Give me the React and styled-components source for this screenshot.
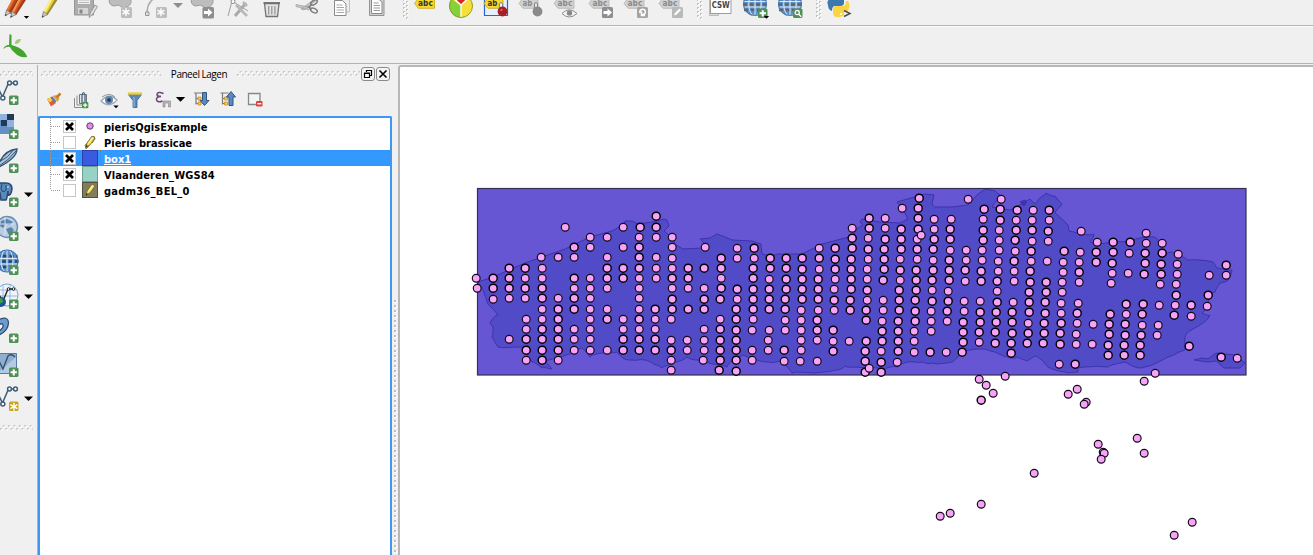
import React from "react";
import styled, { createGlobalStyle } from "styled-components";

const GlobalStyle = createGlobalStyle`
  html, body { margin: 0; height: 100%; overflow: hidden; background: #f0f0f0; }
  * { box-sizing: border-box; }
  svg { display: block; }
`;

const Window = styled.div`
  width: 1313px;
  height: 555px;
  display: flex;
  flex-direction: column;
  background: #f0f0f0;
  font-family: "DejaVu Sans Condensed", "DejaVu Sans", sans-serif;
  color: #000;
  overflow: hidden;
`;

const ToolBar = styled.div`
  display: flex;
  flex: none;
  height: ${(p) => p.$height}px;
  border-bottom: 1px solid #b4b4b4;
  border-top: ${(p) => (p.$lit ? "1px solid #fbfbfb" : "none")};
  overflow: hidden;
`;

const Workspace = styled.div`
  display: flex;
  flex: 1;
  min-height: 0;
  padding-top: 1px;
`;

const SideBar = styled.div`
  display: flex;
  flex-direction: column;
  flex: none;
  width: 37px;
  padding-top: 6px;
`;

const SideTools = styled.div`
  display: flex;
  flex-direction: column;
  padding: 2px 0 6px;
`;

const LayersPanel = styled.section`
  display: flex;
  flex-direction: column;
  flex: none;
  width: 356px;
  border-left: 1px solid #b0b0b0;
`;

const PanelTitle = styled.header`
  display: flex;
  align-items: center;
  height: 18px;
  padding: 0 0 1px 3px;
`;

const TitleText = styled.h2`
  margin: 0;
  width: 76px;
  flex: none;
  text-align: center;
  font: 400 10px "Open Sans", sans-serif;
  letter-spacing: -0.48px;
  white-space: nowrap;
`;

const TitleButton = styled.button`
  display: grid;
  place-items: center;
  flex: none;
  width: 14px;
  height: 14px;
  margin-left: 1px;
  padding: 0;
  border: 1px solid #8a8a8a;
  border-radius: 3px;
  background: #f4f4f4;
`;

const PanelTools = styled.div`
  display: flex;
  height: 33px;
  padding: 1px 0 0 2px;
`;

const Tree = styled.ul`
  flex: 1;
  margin: 0;
  padding: 0;
  list-style: none;
  width: 354px;
  border: 2px solid #3d97f3;
  border-bottom: 0;
  border-radius: 2px 2px 0 0;
  background: #fff;
`;

const Row = styled.li`
  display: flex;
  align-items: center;
  height: 16px;
  background: ${(p) => (p.$selected ? "#3399ff" : "transparent")};
  color: ${(p) => (p.$selected ? "#fff" : "#000")};
`;

const RowLabel = styled.span`
  flex: 1;
  height: 16px;
  line-height: 17px;
  padding-left: 3px;
  border: 1px ${(p) => (p.$selected ? "dotted #c0702a" : "solid transparent")};
  font-size: 11px;
  font-weight: 700;
  letter-spacing: ${(p) => p.$track || 0}px;
  text-decoration: ${(p) => (p.$selected ? "underline" : "none")};
  white-space: nowrap;
`;

const Splitter = styled.div`
  flex: none;
  width: 5px;
  display: flex;
  align-items: flex-start;
  justify-content: flex-start;
  padding-top: 235px;
`;

const MapFrame = styled.main`
  flex: 1;
  min-width: 0;
  margin-top: 0;
  border: 2px solid #b7b7b7;
  border-right: 0;
  border-bottom: 0;
  border-top-left-radius: 3px;
  background: #fff;
  overflow: hidden;
`;

/* ---------- icon pieces ---------- */

const Icon = ({ w, h, children }) => (
  <svg width={w} height={h} viewBox={`0 0 ${w} ${h}`} style={{ flex: "none" }}>{children}</svg>
);

const Badge = ({ x, y, kind = "plus", fill = "#4f9155", size = 9.5 }) => (
  <g transform={`translate(${x} ${y})`}>
    <rect width={size} height={size} rx="1.6" fill={fill} />
    {kind === "plus" && <path d="M4.75 1.7v6.2M1.6 4.75h6.3" stroke="#fff" strokeWidth="2" />}
    {kind === "star" && <path d="M5 1.2v8M1.4 3.2l7 4M8.4 3.2l-7 4" stroke="#fff" strokeWidth="1.4" />}
    {kind === "arrow" && <path d="M1.5 4h4V1.6L10 5.5 5.5 9.4V7h-4z" fill="#fff" />}
    {kind === "turn" && <path d="M3 6C2 2.500 6.500 1 8 3.500S7 8 5 7.500M4.500 4.500v4H8" stroke="#fff" strokeWidth="1.5" fill="none" />}
    {kind === "pen" && <path d="M2 8.6l.8-2.4L7.5 1.6l1.5 1.5-4.6 4.6z" fill="#fff" />}
    {kind === "lens" && <path d="M6 6l2.3 2.3M4.2 2a2.1 2.1 0 1 1 0 4.2a2.1 2.1 0 0 1 0-4.2" stroke="#fff" strokeWidth="1.3" fill="none" />}
  </g>
);

const Caret = ({ x, y, s = 4.5, fill = "#000" }) => (
  <path d={`M${x - s} ${y}h${s * 2}l${-s} ${s}z`} fill={fill} />
);

const Pencil = ({ x, y, a, b, c }) => (
  <g transform={`translate(${x} ${y})`}>
    <path d="M0 0l1.5-6L10-22h7L5-3z" fill={b} />
    <path d="M1.5-6L10-22h2.5L3-4.5z" fill={a} />
    <path d="M4.2-3.2L14-20h3L5.4-2z" fill={c} />
    <path d="M0 0l1.5-6 4.2 2.8z" fill="#c9c5bb" stroke="#777" strokeWidth=".7" />
    <path d="M0 0l.6-2 1.3 1z" fill="#333" />
  </g>
);

const VGrip = ({ w, h = 24, x }) => (
  <Icon w={w} h={h}>
    {[0, 4, 8, 12, 16].map((y) => (
      <g key={y}>
        <rect x={x} y={y - 1} width="2" height="2" fill="#c3c3c3" />
        <rect x={x + 1} y={y} width="1.5" height="1.5" fill="#fff" />
        <rect x={x + 3} y={y + 1} width="2" height="2" fill="#c3c3c3" />
        <rect x={x + 4} y={y + 2} width="1.5" height="1.5" fill="#fff" />
      </g>
    ))}
  </Icon>
);

const SplitDots = ({ count }) => (
  <Icon w={5} h={count * 5}>
    {Array.from({ length: count }, (_, i) => (
      <g key={i}>
        <rect x="1" y={i * 5} width="2" height="2" fill="#bdbdbd" />
        <path d={`M3.500 ${i * 5 + 0.5}v2h-2`} stroke="#fff" fill="none" />
      </g>
    ))}
  </Icon>
);

const HGrip = ({ w }) => (
  <Icon w={w} h={6}>
    {Array.from({ length: Math.floor(w / 5.4) + 1 }, (_, i) => (
      <g key={i}>
        <rect x={i * 5.4} y="3" width="2" height="2" fill="#c6c6c6" />
        <rect x={i * 5.4 + 1} y="4" width="1.500" height="1.500" fill="#fff" />
        <rect x={i * 5.4 + 2.7} y="0" width="2" height="2" fill="#c6c6c6" />
        <rect x={i * 5.4 + 3.7} y="1" width="1.500" height="1.500" fill="#fff" />
      </g>
    ))}
  </Icon>
);

const Tag = ({ on, text = "abc", w = 20 }) => (
  <g>
    <path d={`M0 3.5L4-2H${w}V8.300H4z`} fill={on ? "#f5d92c" : "#d2d2d2"} stroke={on ? "#c9a412" : "#b2b2b2"} strokeWidth=".8" />
    <text x="3.600" y="6.300" fontSize="8.300" fontWeight="700" fontFamily="DejaVu Sans" fill={on ? "#333" : "#8a8a8a"} textLength={text.length * 4.9} lengthAdjust="spacingAndGlyphs">{text}</text>
  </g>
);

const Cloud = () => (
  <path d="M.5-2C-1 4 3 7 7 5.500s5 3 9 2 6-3 6-6V-4H1z" fill="#bdbdbd" stroke="#999" />
);

const Globe = ({ x, y, r = 12, land }) => (
  <g transform={`translate(${x} ${y})`}>
    <circle r={r} fill="#5d92cc" />
    <path d={`M${-r + 1} -5h${r * 2 - 2}M${-r} 0.500h${r * 2}M${-r + 1} 6h${r * 2 - 2}`} stroke={land} strokeWidth="2.600" strokeDasharray="4 2.500" />
    <path d={`M0 ${-r}V${r}M${-r} 3h${r * 2}M${-r} -2.500h${r * 2}`} stroke="#d9e8f7" strokeWidth="1" />
    <ellipse rx={r * 0.52} ry={r} fill="none" stroke="#d9e8f7" />
    <circle r={r - 0.5} fill="none" stroke="#4677ad" />
  </g>
);

/* ---------- top toolbar ---------- */

const EditTools = () => (
  <>
    <Icon w={32} h={25}>
      <Pencil x={5} y={16} a="#e9792f" b="#c2451c" c="#8f3a1e" />
      <Pencil x={10.500} y={17.500} a="#ef9a49" b="#d9521e" c="#963e20" />
      <Caret x={26.500} y={16} s={2.700} />
    </Icon>
    <Icon w={35} h={25}><Pencil x={10} y={17.500} a="#fbf08a" b="#e6cf3c" c="#98883a" /></Icon>
    <Icon w={35} h={25}>
      <path d="M7.500-3h19v18h-19z" fill="#adadad" stroke="#969696" />
      <path d="M11-3h12v7H11z" fill="#efefef" /><path d="M12 0h10M12 2.500h10" stroke="#bbb" />
      <path d="M11 8h10v6H11z" fill="#d6d6d6" /><path d="M12.500 9.500h3v4h-3z" fill="#888" />
      <path d="M22 17.500l1.500-5L28 5l2.500 1.500L26 14z" fill="#dedede" stroke="#888" strokeWidth=".8" />
    </Icon>
    <Icon w={35} h={25}><g transform="translate(7)"><Cloud /></g><Badge x={19} y={7} kind="star" fill="#bdbdbd" size={11} /></Icon>
    <Icon w={49} h={25}>
      <path d="M10 14C10 6 12 1 18-2" stroke="#aaa" strokeWidth="1.500" fill="none" />
      <path d="M8.500 12h3.500v3.500H8.500z" fill="#ddd" stroke="#999" />
      <Badge x={19} y={7} kind="star" fill="#bdbdbd" size={11} />
      <Caret x={41} y={3} s={5} fill="#8d8d8d" />
    </Icon>
    <Icon w={35} h={25}><g transform="translate(5)"><Cloud /></g><Badge x={16.500} y={7} kind="arrow" fill="#8e8e8e" size={11.500} /></Icon>
    <Icon w={34} h={25}>
      <path d="M7 16L11 1l16 10" stroke="#a0a0a0" fill="none" />
      <circle cx="12" cy="1.500" r="2" fill="#fff" stroke="#888" />
      <path d="M14 16L25 3" stroke="#aaa" strokeWidth="3" /><path d="M15 5l11 11M22 2l4 4" stroke="#b7b7b7" strokeWidth="2.500" />
    </Icon>
    <Icon w={35} h={25}>
      <path d="M9.500 3.500h14.500l-1.500 13h-11.500z" fill="#e3e3e3" stroke="#737373" strokeWidth="1.300" />
      <path d="M8.500 3h16.500" stroke="#6f6f6f" strokeWidth="1.800" /><path d="M13.700 6v8.500M16.800 6v8.500M19.900 6v8.500" stroke="#999" strokeWidth="1.300" />
    </Icon>
    <Icon w={35} h={25}>
      <path d="M6 4.500l15 3L19 10 6 6.500zM26-2l2 1L14 10l-3-1z" fill="#c6c6c6" stroke="#9d9d9d" strokeWidth=".7" />
      <ellipse cx="24" cy="10.500" rx="3.500" ry="2" transform="rotate(25 24 10.500)" stroke="#7f7f7f" strokeWidth="1.500" fill="none" />
      <ellipse cx="24" cy="2.500" rx="3.700" ry="2" transform="rotate(-35 24 2.500)" stroke="#7f7f7f" strokeWidth="1.500" fill="none" />
      <path d="M19 7l3-2.500M18 6.500l3 2.500" stroke="#7f7f7f" strokeWidth="1.600" />
    </Icon>
    <Icon w={35} h={25}>
      <path d="M14.500-2h10v14h-10z" fill="#ededed" stroke="#c4c4c4" />
      <path d="M9.500.500h8l3.500 3.500v11.500H9.500z" fill="#fff" stroke="#8b8b8b" />
      <path d="M11.500 5h6M11.500 7.500h7.500M11.500 10h7.500M11.500 12.500h7.500" stroke="#aaa" />
    </Icon>
    <Icon w={37} h={25}>
      <path d="M9.500-2H24v17.500H9.500z" fill="#d2d2d2" stroke="#929292" />
      <path d="M11.500-1h7l3.500 3v11.500H11.500z" fill="#fff" stroke="#888" />
      <path d="M13.500 3h5M13.500 5.500H20M13.500 8H20M13.500 10.500H20" stroke="#999" />
    </Icon>
  </>
);

const LabelTools = () => (
  <>
    <VGrip w={15} x={6} />
    <Icon w={31} h={25}><g transform="translate(2.500)"><Tag on /></g></Icon>
    <Icon w={36} h={25}>
      <circle cx="18" cy="6" r="11.500" fill="#f6df3b" />
      <path d="M18 6v11.500A11.500 11.500 0 0 1 8.500-1z" fill="#85d238" />
      <path d="M18 4.500L10-4h16z" fill="#d92424" />
      <path d="M18 17.500V5L9-3M18 5L27-3" stroke="#fff" strokeWidth="1.300" fill="none" />
      <circle cx="18" cy="6" r="11.500" fill="none" stroke="#8f9b2c" />
    </Icon>
    <Icon w={35} h={25}>
      <path d="M5.500-2h23v17.500h-23z" fill="#e6efff" stroke="#2668cf" strokeWidth="1.200" />
      <g transform="translate(5)"><Tag on text="ab" w={19} /></g>
      <path d="M20.500 9V4q1.500-3 3 0v5" stroke="#888" strokeWidth="1.200" fill="#fff" />
      <circle cx="23.500" cy="11.500" r="4.900" fill="#a81e25" /><circle cx="22.500" cy="10" r="1.200" fill="#cf6060" />
    </Icon>
    <Icon w={35} h={25}>
      <g transform="translate(5)"><Tag text="ab" w={19} /></g>
      <path d="M20.500 9V4q1.500-3 3 0v5" stroke="#888" strokeWidth="1.200" fill="#eee" /><circle cx="23.500" cy="11.500" r="4.900" fill="#8a8a8a" />
    </Icon>
    <Icon w={35} h={25}>
      <g transform="translate(5)"><Tag /></g>
      <path d="M13 13.500q7-7.500 15 0q-8 7-15 0z" fill="#f4f4f4" stroke="#8c8c8c" /><circle cx="20.500" cy="13" r="2.700" fill="#888" />
    </Icon>
    <Icon w={35} h={25}><g transform="translate(5)"><Tag /></g><Badge x={18} y={7} kind="arrow" fill="#8e8e8e" size={11} /></Icon>
    <Icon w={35} h={25}><g transform="translate(5)"><Tag /></g><Badge x={18} y={7} kind="turn" fill="#a4a4a4" size={11} /></Icon>
    <Icon w={36} h={25}><g transform="translate(5)"><Tag /></g><Badge x={18} y={7} kind="pen" fill="#b9b9b9" size={11} /></Icon>
  </>
);

const WebTools = () => (
  <>
    <VGrip w={18} x={7} />
    <Icon w={30} h={25}>
      <path d="M1.500-2h9v17.500H1.500z" fill="#ddd" stroke="#bbb" />
      <path d="M2.500-2h20.500v15.500H2.500z" fill="#fff" stroke="#9b9b9b" />
      <text x="3.700" y="7.800" fontSize="8.700" fontWeight="700" fontFamily="DejaVu Sans" fill="#444" textLength="18" lengthAdjust="spacingAndGlyphs">CSW</text>
    </Icon>
    <Icon w={35} h={25}><Globe x={17} y={4} land="#66615d" /><Badge x={20} y={8.500} /><Caret x={28.500} y={16} s={2.700} /></Icon>
    <Icon w={35} h={25}><Globe x={17} y={4} land="#66615d" /><Badge x={20} y={8.500} kind="lens" /></Icon>
    <VGrip w={17} x={8} />
    <Icon w={35} h={25}>
      <path d="M3 5Q1 0 6-1h13v4q0 3-4 3h-5q-3 0-3 5Q3 10 3 5z" fill="#3c78ad" />
      <path d="M8 13V9q0-3 4-3h6q3 0 3-5h2q3 4 0 10l-4 1v3q-5 4-10 1z" fill="#fbd444" /><circle cx="16" cy="14" r="1" fill="#fff" />
      <path d="M19 10.500l6 3-6 3" stroke="#4d4d4d" strokeWidth="1.500" fill="none" />
    </Icon>
  </>
);

/* ---------- left toolbar ---------- */

const Vector = () => (
  <g fill="none" stroke="#3f5d78" strokeWidth="1.500">
    <path d="M-2 9L2.500 18 8.500 4h6" /><circle cx="2.800" cy="19" r="2" fill="#fff" /><circle cx="9.500" cy="4" r="1.900" fill="#fff" /><circle cx="15.500" cy="4" r="1.900" fill="#fff" />
  </g>
);

const sideIcons = [
  { art: <Vector /> },
  { art: <><path d="M-6 1h20v20H-6z" fill="#6490c4" /><path d="M0 1h7v6H0zM7 7h7v7H7z" fill="#8eb2dc" /><path d="M7 1h7v6H7zM1 7h6v6H1zM0 19H-4v-6h4z" fill="#223a58" /></> },
  { art: <><path d="M-1 16Q5 3 17 2q0 9-18 18z" fill="#a9c5e0" stroke="#37526c" strokeWidth="1.300" /><path d="M-1 19Q8 14 16 4M0 14Q8 11 13 3" stroke="#37526c" fill="none" /></> },
  { menu: true, art: <><path d="M-2 2h8q6 0 6 6-1 7-4 6v-4q-1 8-2 9H1l-1-7h-2z" fill="#5789ba" stroke="#28486b" strokeWidth="1.500" /><path d="M2 3q-2 5 0 7t4-1V4" fill="none" stroke="#28486b" /><circle cx="8" cy="6" r=".8" fill="#fff" /></> },
  { menu: true, art: <><circle cx="7" cy="12" r="10.500" fill="#b7cde3" stroke="#6d8fb3" strokeWidth="1.500" /><path d="M1 6l6-2 6 3-3 3-4-1-3 4-3-2zM6 14l5-2 3 3-5 5z" fill="#5b84ad" /><path d="M0 9h14M5 2v18" stroke="#e6f0fa" strokeWidth=".8" /></> },
  { art: <Globe x={7} y={12} r={11.500} land="#27476d" /> },
  { menu: true, art: <><circle cx="7" cy="12" r="11" fill="#f0f5fb" stroke="#7ba5d2" /><path d="M-3 7h20M-3 13h20M10 2v20M3 2v20" stroke="#8eb3da" strokeWidth=".9" /><path d="M-1 12L3 18 8 6h6" stroke="#222" strokeWidth="1.400" fill="none" /><circle cx="8.500" cy="6" r="1.300" fill="#fff" stroke="#222" /><circle cx="13.500" cy="6" r="1.300" fill="#fff" stroke="#222" /><circle cx="1" cy="19" r="5" fill="#1d5590" /><path d="M-2 16l4-1 1 4-4 2z" fill="#3ba53c" /></> },
  { art: <path d="M-2 3q10-5 10.500 3Q8 14-1 18v-4q5-3 4-6t-5 1z" fill="#6e9bcd" stroke="#2c4e74" strokeWidth="1.300" /> },
  { art: <><path d="M-2 2.500h18.500v20H-2z" fill="#8fafd0" stroke="#577ba2" /><path d="M-1 21L16 6v16H-1z" fill="#b2cae2" /><path d="M-1 10l4 8L8 5q3-3 7 1" stroke="#35536f" strokeWidth="1.400" fill="none" /></> },
  { menu: true, star: true, art: <Vector /> },
];

/* ---------- layers panel toolbar ---------- */

const TreeArrow = ({ up }) => (
  <>
    <path d="M3 3.500h8M5 4v11M5 9h4M5 14h4" stroke="#7b7b7b" fill="none" strokeWidth="1.200" />
    <path d="M7 7.500h3v3H7zM7 12.500h3v3H7z" fill="#f3c660" stroke="#c9912b" strokeWidth=".8" />
    <path d={up ? "M11.500 16V7.500H9L13.500 2 18 7.500h-2.500V16z" : "M11.500 3v8H9l4.500 5L18 11h-2.500V3z"} fill="#5a8ac0" stroke="#2f567f" />
  </>
);

const PanelIcons = () => (
  <>
    <Icon w={27} h={32}>
      <path d="M7 15l5-2 4 6-5 3.500z" fill="#e35a3d" /><path d="M7 15l3.500-1.500 2 3-3 2z" fill="#f4d23c" /><path d="M10.500 13l2-.5 4 5-2.500 1z" fill="#4a80c0" />
      <path d="M12.500 12l5 6 2-3.500-3-3.500z" fill="#e0a04a" /><path d="M16.500 13.500l4-4" stroke="#c47a2b" strokeWidth="2.500" />
    </Icon>
    <Icon w={29} h={32}>
      <path d="M10 11.500v9.500h9M7.500 14v9.500h8" stroke="#8b8b8b" fill="none" /><path d="M12.500 10.500h7v9h-7z" fill="#e4e4e4" stroke="#777" /><path d="M15 20V11q1.500-5 3 0v7" stroke="#3b5e86" fill="none" strokeWidth="1.200" />
      <g transform="translate(15 18) scale(.67)"><Badge x={0} y={0} /></g>
    </Icon>
    <Icon w={27} h={32}>
      <path d="M5 17q8-9 16-1q-8 9-16 1z" fill="#fff" stroke="#a1aab0" strokeWidth="1.300" /><path d="M6 13q7-5 13 0" stroke="#8b9499" fill="none" />
      <circle cx="13" cy="16" r="4" fill="#5d87b2" /><circle cx="13" cy="16" r="1.800" fill="#213650" /><Caret x={20} y={21.500} s={2.700} />
    </Icon>
    <Icon w={27} h={32}>
      <path d="M5 10h14l-5 6.500v7h-4v-7z" fill="#5c89b9" stroke="#35618f" strokeWidth=".8" /><path d="M5 9.500h14" stroke="#edce3e" strokeWidth="2.400" /><path d="M11 13v10" stroke="#9abbe0" />
    </Icon>
    <Icon w={37} h={32}>
      <path d="M13.500 9.500q-6-2.500-6.500 1 .500 2.500 4 2-5 0-4.500 3.500 1 3 6 1" stroke="#6c4676" strokeWidth="1.500" fill="none" />
      <path d="M13 23v-6h7.500v6h-2v-4h-3.500v4z" fill="#b5b5b5" stroke="#919191" strokeWidth=".7" /><Caret x={30.500} y={13} s={4.700} />
    </Icon>
    <Icon w={27} h={32}><g transform="translate(4 5.500)"><TreeArrow /></g></Icon>
    <Icon w={27} h={32}><g transform="translate(3.500 5.500)"><TreeArrow up /></g></Icon>
    <Icon w={27} h={32}>
      <path d="M7.500 9.500h11.500v11h-11.500z" fill="#f4f4f4" stroke="#7d8d84" strokeWidth="1.300" /><rect x="15" y="17" width="6.500" height="5.500" rx="1.300" fill="#df4141" /><path d="M16.300 19.700h4" stroke="#fff" strokeWidth="1.400" />
    </Icon>
  </>
);

const layers = [
  { name: "pierisQgisExample", on: true, kind: "point" },
  { name: "Pieris brassicae", kind: "pencil" },
  { name: "box1", on: true, kind: "fill", color: "#3c5adf", edge: "#2a3fa8", selected: true },
  { name: "Vlaanderen_WGS84", on: true, kind: "fill", color: "#98d1c6", edge: "#6aa096", track: 0.12 },
  { name: "gadm36_BEL_0", kind: "fill", color: "#827d5c", edge: "#55523c", editing: true, last: true, track: 0.28 },
];

const TreePencil = () => (
  <g>
    <path d="M4 13l1-4 5-7 3 2-5 7z" fill="#f2df5e" stroke="#75682d" strokeWidth=".9" />
    <path d="M6.500 9.500l4.500-6" stroke="#fff8b0" /><path d="M3.500 14l1-3 1.500 1z" fill="#333" />
  </g>
);

const LayerGlyph = ({ layer }) => (
  <Icon w={60} h={16}>
    <path d={`M10.500 0V${layer.last ? 8 : 16}M11 8.500h10`} stroke="#9b9b9b" strokeDasharray="1 1" fill="none" />
    <rect x="23.500" y="2.500" width="12" height="12" fill="#fff" stroke="#c6c6c6" />
    {layer.on && <path d="M26 5l7 7M33 5l-7 7" stroke="#000" strokeWidth="2.700" />}
    {layer.kind === "point" && <circle cx="50" cy="8" r="3.200" fill="#e38df0" stroke="#59415e" />}
    {layer.kind === "fill" && <rect x="42.500" y=".500" width="15" height="15" fill={layer.color} stroke={layer.edge} />}
    {layer.kind === "pencil" && <path d="M51 5l3-3 1 3-3 4zM45 11l4-3v4l-3 3z" fill="#b9a53b" stroke="#75682d" strokeWidth=".7" />}
    {(layer.kind === "pencil" || layer.editing) && <g transform="translate(42 0)"><TreePencil /></g>}
  </Icon>
);

/* ---------- map content ---------- */

// One entry per run of observations: "x:y,y,..." where * marks a stack of overlapping points.
const observations = `
476:278 477:288 493:278*,288*,299 509:268*,278*,288*,298,339 525:268*,278,288*,298 526:319,329,339*,350*,360
541:257 542:268,278,288*,298*,309,319,329*,339*,350*,360* 558:257,298,309*,319*,329*,339*,350*,360 565:227
574:247*,257,278*,288,298*,309*,329,339,350 590:237,247,278,288,298,309,319,329,339,350
607:237,257,268*,278*,288,309,319*,350 623:227,247,268*,278*,319,329,339*,350* 640:227*
639:237,247*,257*,268*,278,288,298,309,319*,329,339*,350* 656:216*,227*,237,257,268,278 655:309*,319,329,339*,350*
672:237,247,258,268,278*,288,299*,309* 671:319,340,350*,360,370 688:268*,278*,288,309* 687:340,350
705:247 704:268*,288,299*,309*,329,340,350 703:360 721:258*,268*,278,288* 720:299*,319,329*,340*,350*,360* 719:370*
737:248,258,289*,299 736:309*,319*,330*,340*,350*,360*,371* 754:248*,258 753:268*,278*,289*,299*,309*,319 752:330,350,360
770:258*,268* 769:279,289*,299*,309*,330 768:340,350 786:258*,268*,279*,289* 785:299*,309*,320,330 784:350*,361
802:258*,269*,279*,289*,299* 801:310,320,330,340,350 800:361 819:248,258*,269 818:279*,289*,299*,310 817:320*,330*,340,361
835:248*,259*,269*,279 834:289,300*,310 833:330*,341,351* 852:228,238*,248* 851:259*,269*,279*,289* 850:300*,310* 849:341
869:218*,228* 868:238,249*,259 867:269,279,290*,300 866:310*,320*,341* 865:351*,361*,372* 869:368
885:218,228,239* 884:249*,259*,269* 883:280*,300,310 882:321,331*,341* 881:351,362*,372*
902:208 901:229*,239*,249* 900:259,270*,280 899:290*,300*,310* 898:321*,331*,341*,351* 897:362
919:198* 918:208*,218*,229* 917:239,249*,259 916:270*,280*,290* 915:300*,311*,321* 914:331,341,352 921:235
934:219,229,239* 933:249*,260,270* 932:280*,290,301* 931:311,321,331 930:352*
951:219 950:229*,239*,250 949:260*,270*,280* 948:291,301* 947:311*,321 946:352
968:199 966:250,260 965:270*,281 964:301,311 963:322*,332*,342* 962:352*
984:209* 983:219,230*,240* 982:250,260 981:271*,281* 980:301,312*,322* 979:332*,342
1001:199 1000:209*,220* 999:230,240,250 998:261,271 997:281*,291,302* 996:312*,322* 995:332*,343*
1017:210* 1016:220,230* 1015:240*,251 1014:261*,271,281 1013:302 1012:312*,322*,333* 1011:343*,353*
1033:210 1032:220,230*,241 1031:251*,261 1030:271*,282* 1029:292*,302*,312* 1028:323,333* 1027:343*
1049:210*,220 1048:231*,241 1047:261 1046:282*,292* 1045:302*,313* 1044:323*,333* 1043:343*
1064:251* 1063:262,272 1062:282,292 1061:303,313,323* 1060:333*,344* 1059:364
1081:231 1080:252 1079:262,272*,282 1078:303 1077:313*,323 1076:334,344 1075:364*
1097:242 1096:252*,262* 1093:324 1092:344 1113:242*,252* 1112:263*,273 1111:283 1110:314* 1109:324*,334* 1108:345*,355*
1130:242* 1129:253 1128:273 1126:304*,314 1125:324*,335* 1124:345*,355*
1146:233,243 1145:253*,263* 1144:274* 1143:304* 1142:314*,325 1141:335* 1140:345*,355*
1162:243,253* 1161:264*,274* 1160:284 1159:305 1158:325 1157:335
1178:254 1177:264,274 1176:284,295* 1175:305 1174:315* 1191:305*,316 1189:346*
1226:265*,275 1209:275 1208:295* 1207:306 1221:357* 1237:358 1155:373 1144:381
979:379 986:385 993:393 981:400* 1005:376 1068:394 1077:389 1086:402 1084:404 1098:444 1103:452 1104:453 1101:459
1137:438 1144:453 1034:473 981:504 940:516 950:513 1192:522 1174:535
`.trim().split(/\s+/).flatMap((run) => {
  const [x, ys] = run.split(":");
  return ys.split(",").map((y) => ({ x: +x, y: parseInt(y, 10), stacked: y.endsWith("*") }));
});

const northCoast = "478,282 493,277 525,263 565,249 590,237 612,231 623,225 625,221 632,221 638,224 652,222 664,219 667,220 669,226 664,231 671,237 676,245 683,249 702,248 704,243 700,239 710,238 717,234 725,237 732,240 752,241 761,244 762,254 770,256 778,254 802,254 822,244 845,238 852,236 858,228 863,225 860,222 862,219 880,222 900,223 908,219 903,209 897,202 925,194 934,195 932,204 935,207 952,207 968,205 977,195 985,189 995,191 1000,195 992,207 1010,210 1020,205 1030,199 1035,204";
const eastBorder = "1040,198 1046,193 1055,196 1062,204 1055,213 1068,225 1069,231 1082,234 1094,234 1090,242 1098,244 1128,242 1147,237 1155,237 1162,243 1163,253 1172,252 1188,260 1213,262 1217,268 1232,270 1228,280 1220,283 1215,292 1210,297 1208,305 1202,313 1210,315 1203,323 1187,333 1185,340 1185,350 1168,357 1145,367 1135,367 1125,362 1108,367 1078,368 1078,372 1065,372 1048,367 1042,360 1035,356";
const southBorder = "1027,361 1018,357 1008,357 995,352 982,349 965,352 958,357 952,362 932,363 923,362 908,362 898,367 885,369 855,367 845,366 835,370 815,373 792,373 787,367 783,361 768,362 753,358 743,355 737,358 727,367 712,364 698,360 687,357 672,363 662,368 655,365 645,360 632,360 623,358 617,352 602,353 590,357 582,348 573,353 555,357 545,360 552,369 542,368 532,362 522,347 498,347 492,337 493,327 490,323 498,315 488,304 483,290";

const parse = (s) => s.split(" ").map((p) => p.split(",").map(Number));
const roughen = (pts, amount) =>
  pts.flatMap(([x, y], i) => {
    const [nx, ny] = pts[(i + 1) % pts.length];
    const out = [[x, y]];
    if (Math.hypot(nx - x, ny - y) > 7 && i < pts.length - 1) {
      [0.3, 0.5, 0.8].forEach((t, k) => {
        const wobble = Math.sin((i * 3 + k) * 12.9) * amount;
        out.push([x + (nx - x) * t + wobble * 0.5, y + (ny - y) * t + wobble]);
      });
    }
    return out;
  });
const region = [...parse(northCoast), ...roughen(parse(eastBorder), 0.9), ...roughen(parse(southBorder), 1.1)].join(" ");

const Map = () => (
  <svg width="913" height="488" viewBox="400 67 913 488">
    <rect x="477.500" y="188.500" width="768.500" height="186.500" fill="#6656d3" />
    <g fill="#524bc8" stroke="#3e32ad" strokeWidth="1" strokeLinejoin="round">
      <polygon points={region} />
      <polygon points="1194,360 1202,358 1208,359 1216,353 1235,355 1245,363 1240,368 1224,368 1216,361 1208,362" />
      <polygon points="1020,202 1025,200 1027,202 1024,206" fill="#3e32ad" />
    </g>
    <rect x="477.500" y="188.500" width="768.500" height="186.500" fill="none" stroke="#343052" strokeWidth="1.200" />
    {observations.map(({ x, y, stacked }, i) => (
      <circle key={i} cx={x + 0.2} cy={y + 0.2} r={stacked ? 4 : 3.9} fill="#f7a4f8" stroke={stacked ? "#000" : "#120c18"} strokeWidth={stacked ? 1.45 : 1.2} />
    ))}
  </svg>
);

export default function App() {
  return (
    <Window>
      <GlobalStyle />
      <ToolBar $height={26}><EditTools /><LabelTools /><WebTools /></ToolBar>
      <ToolBar $height={38} $lit>
        <Icon w={36} h={36}>
          <path d="M9.500 7l2 1v10q8 2 12 6 4 5 3.500 6-8 1-12-4-4-3-5-6-3-1-7 2 2-4 6-4z" fill="#43a52b" /><path d="M15 16q0-4 6-4-1 5-6 5z" fill="#a3cb78" />
        </Icon>
      </ToolBar>
      <Workspace>
        <SideBar>
          <HGrip w={33} />
          <SideTools>
            {sideIcons.map((t, i) => (
              <Icon key={i} w={37} h={34}>
                {t.art}
                <Badge x={9} y={16.500} kind={t.star ? "star" : "plus"} fill={t.star ? "#c9a51f" : undefined} />
                {t.menu && <Caret x={28.500} y={11.500} />}
              </Icon>
            ))}
          </SideTools>
          <HGrip w={33} />
        </SideBar>
        <LayersPanel>
          <PanelTitle>
            <HGrip w={120} />
            <TitleText>Paneel Lagen</TitleText>
            <HGrip w={123} />
            <TitleButton><Icon w={10} h={10}><path d="M3.500 3V1.500h5v5H7M3 1.500h6M1.500 4.500h5v4h-5zM1 4h6" fill="none" stroke="#000" strokeWidth="1.200" /></Icon></TitleButton>
            <TitleButton><Icon w={10} h={10}><path d="M1.500 1.500l7 7M8.500 1.500l-7 7" stroke="#000" strokeWidth="1.600" /></Icon></TitleButton>
          </PanelTitle>
          <PanelTools><PanelIcons /></PanelTools>
          <Tree>
            {layers.map((l) => (
              <Row key={l.name} $selected={l.selected}>
                <LayerGlyph layer={l} />
                <RowLabel $selected={l.selected} $track={l.track}>{l.name}</RowLabel>
              </Row>
            ))}
          </Tree>
        </LayersPanel>
        <Splitter><SplitDots count={51} /></Splitter>
        <MapFrame><Map /></MapFrame>
      </Workspace>
    </Window>
  );
}
